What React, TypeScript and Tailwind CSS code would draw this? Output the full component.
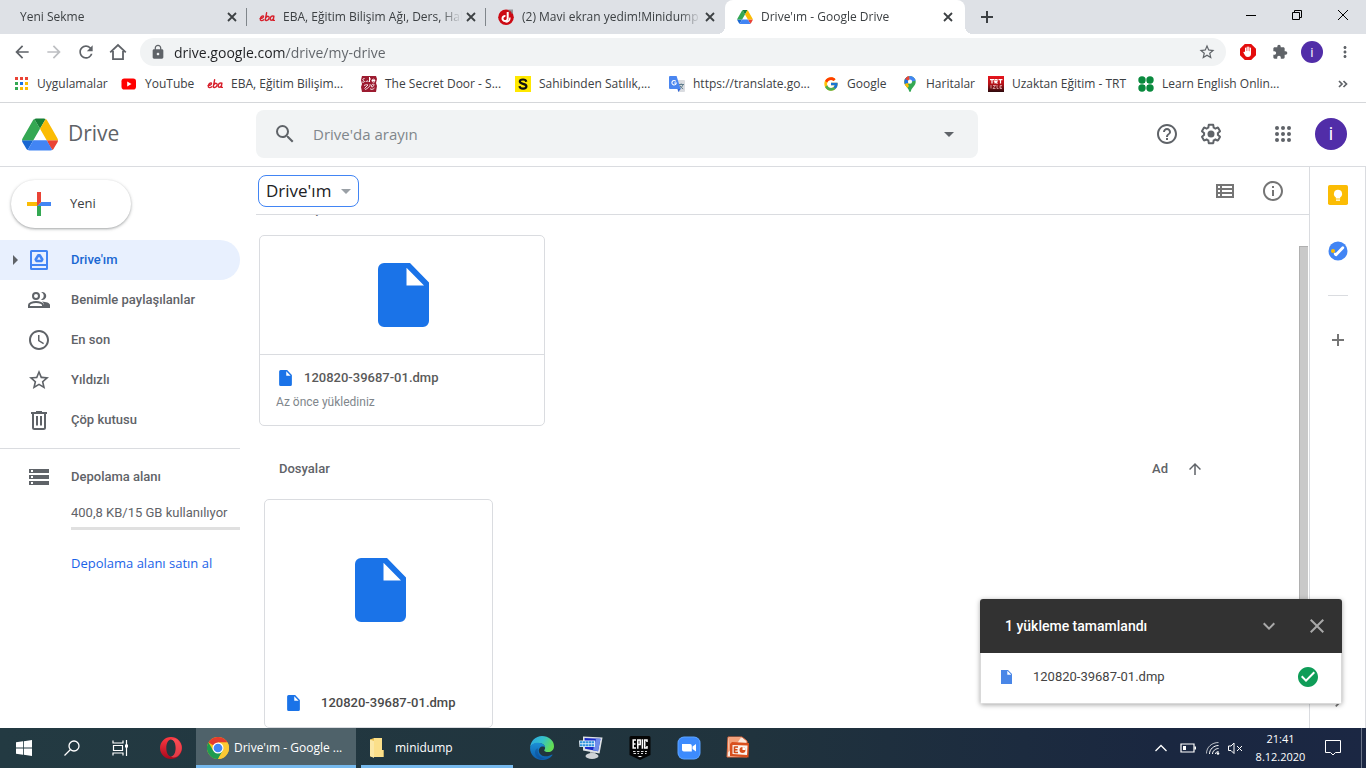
import React from "react";
import {
  MdAccessTime,
  MdAdd,
  MdArrowBack,
  MdArrowDropDown,
  MdArrowForward,
  MdArrowRight,
  MdArrowUpward,
  MdCheckCircle,
  MdChevronRight,
  MdClose,
  MdExpandMore,
  MdExtension,
  MdHelpOutline,
  MdInfoOutline,
  MdLock,
  MdMoreVert,
  MdRefresh,
  MdSearch,
  MdStarBorder,
  MdStorage,
} from "react-icons/md";
import { FcGoogle } from "react-icons/fc";

const FILE_NAME = "120820-39687-01.dmp";

/* ---------- Icons ---------- */

function DriveLogo({ className }: { className: string }) {
  return (
    <svg viewBox="0 0 87.3 78" className={className} aria-hidden="true">
      <path d="m6.6 66.85 3.85 6.65c.8 1.4 1.95 2.5 3.3 3.3l13.75-23.8h-27.5c0 1.55.4 3.1 1.2 4.5z" fill="#1967d2" />
      <path d="m43.65 25-13.75-23.8c-1.35.8-2.5 1.9-3.3 3.3l-25.4 44a9.06 9.06 0 0 0-1.2 4.5h27.5z" fill="#34a853" />
      <path d="m73.55 76.8c1.35-.8 2.5-1.9 3.3-3.3l1.6-2.75 7.65-13.25c.8-1.4 1.2-2.95 1.2-4.5h-27.502l5.852 11.5z" fill="#ea4335" />
      <path d="m43.65 25 13.75-23.8c-1.35-.8-2.9-1.2-4.5-1.2h-18.5c-1.6 0-3.15.45-4.5 1.2z" fill="#188038" />
      <path d="m59.8 53h-32.3l-13.75 23.8c1.35.8 2.9 1.2 4.5 1.2h50.8c1.6 0 3.15-.45 4.5-1.2z" fill="#4285f4" />
      <path d="m73.4 26.5-12.7-22c-.8-1.4-1.95-2.5-3.3-3.3l-13.75 23.8 16.15 28h27.45c0-1.55-.4-3.1-1.2-4.5z" fill="#fbbc04" />
    </svg>
  );
}

function EbaIcon() {
  return (
    <svg viewBox="0 0 16 16" className="size-4 shrink-0" aria-hidden="true">
      <g fill="none" stroke="#d71f2b" strokeWidth="1.4" strokeLinecap="round">
        <path d="M1 9.400c2 .2 3.600-.8 3.500-2C4.300 6.300 1.800 7 1.300 9.600c-.4 2.500 2 2.400 3.500 1.200" />
        <path d="M7.600 3.800 6.300 10.500c-.2 1.700 3.600 1.200 3.900-1.600.2-1.900-1.700-2.100-3-.6" />
        <path d="M14.900 7.200c-2-.9-3.500.6-3.700 2.500-.2 2.200 2.200 2 3.200-.2l.5-2.300-.7 4.200h1.200" />
      </g>
    </svg>
  );
}

function ForumIcon() {
  return (
    <svg viewBox="0 0 16 16" className="size-4 shrink-0" aria-hidden="true">
      <circle cx="8" cy="8.200" r="7.800" fill="#cc0a14" />
      <path d="M9.700 3v6.500a2.600 2.600 0 1 1-2.300-2.600" fill="none" stroke="#fff" strokeWidth="2" />
      <path d="M12 8.500c0 3-2 4.500-4.500 4.500" fill="none" stroke="#fff" strokeWidth="1.400" />
      <path d="M10.500.5h4.500v4h-2v-2h-2.500z" fill="#777" opacity=".7" />
    </svg>
  );
}

function AppsColorIcon() {
  const colors = ["#ea4335", "#ea4335", "#ea4335", "#34a853", "#1a73e8", "#fbbc04", "#34a853", "#fbbc04", "#fbbc04"];
  return (
    <svg viewBox="0 0 16 16" className="size-4 shrink-0" aria-hidden="true">
      {colors.map((c, i) => (
        <rect key={i} x={2 + (i % 3) * 5} y={1 + Math.floor(i / 3) * 5} width="3" height="3" fill={c} />
      ))}
    </svg>
  );
}

function YouTubeIcon() {
  return (
    <svg viewBox="0 0 16 16" className="size-4 shrink-0" aria-hidden="true">
      <rect x="0.500" y="2.500" width="14.500" height="11" rx="2.800" fill="#f00" />
      <path d="M6.200 5.400v5.200L10.500 8z" fill="#fff" />
    </svg>
  );
}

function SecretDoorIcon() {
  return (
    <svg viewBox="0 0 16 16" className="size-4 shrink-0" aria-hidden="true">
      <path d="M1 0h14l1 3-1 4 1 3-1 6H1L0 11l1-3-1-4z" fill="#9c1b30" />
      <g fill="none" stroke="#fff" strokeWidth="1">
        <path d="M3.500 2.500c-3 .3-1 2.200-.3 2.500.8 1-.7 1.500-2 1M5 6c1-2 2-1.500 2 0M8.500 1v5M8 3h2M11 4.500h3c-.5-2-3-1.500-3 .2s2 1.600 3 .8" />
        <path d="M3 9.500c2-1 3.500-1 4-.5l-3.500 3.500M9 8c1 2-3 5-5 5.500M12.500 8c-2 0-3 3-1.500 3s2-2 2-3M9 12.500c1 1.500 3 1 4.500-.5" opacity=".85" />
      </g>
    </svg>
  );
}

function SahibindenIcon() {
  return (
    <svg viewBox="0 0 16 16" className="size-4 shrink-0" aria-hidden="true">
      <rect width="16" height="16" fill="#ffe800" />
      <path
        d="M11.300 5.700C11 4 9.800 3.500 8 3.500c-2 0-3.200.7-3.200 2.100 0 3.100 6.600 1.300 6.600 4.700 0 1.500-1.400 2.300-3.300 2.300-2.100 0-3.400-.8-3.600-2.500"
        fill="none"
        stroke="#111"
        strokeWidth="2.200"
      />
    </svg>
  );
}

function TranslateIcon() {
  return (
    <svg viewBox="0 0 16 16" className="size-4 shrink-0" aria-hidden="true">
      <path d="M6 4h9a1 1 0 0 1 1 1v10a1 1 0 0 1-1 1H9.500z" fill="#dadce0" />
      <path d="M9.500 8.500h5.500M12.200 7.500v1M14 8.500c-.5 2-2 3.500-3.500 4.300M10.800 9.500c.8 1.600 2 2.700 3.400 3.400" stroke="#5f7d8c" fill="none" />
      <path d="M8.500 13h3.200l-2.400 3z" fill="#3367d6" />
      <path d="M1 0h6.600l4 13H1a1 1 0 0 1-1-1V1a1 1 0 0 1 1-1z" fill="#4a86f0" />
      <path d="M6.800 5.300a2.200 2.200 0 1 0 .5 1.700H5.200" fill="none" stroke="#fff" strokeWidth="1.100" />
    </svg>
  );
}

function MapsIcon() {
  return (
    <svg viewBox="0 0 16 16" className="size-4 shrink-0" aria-hidden="true">
      <clipPath id="pin">
        <path d="M8 0a5.700 5.700 0 0 0-5.700 5.700c0 3.800 3.300 5 4.700 9 .5 1.700 1.500 1.700 2 0 1.400-4 4.700-5.200 4.700-9A5.700 5.700 0 0 0 8 0z" />
      </clipPath>
      <g clipPath="url(#pin)">
        <path d="M0 0h16v16H0z" fill="#34a853" />
        <path d="M0 0h8L9 5 3 12H0z" fill="#fbbc04" />
        <path d="M0 0h6l2 5.500L3.500 9H0z" fill="#1a73e8" />
        <path d="M2 0h6l-1 5-4-2z" fill="#ea4335" />
        <path d="M7 0h9v4l-8 2z" fill="#4285f4" />
        <path d="M0 9.500 5 7l2 3-3 4z" fill="#fbbc04" />
      </g>
      <circle cx="8" cy="5.700" r="2.100" fill="#fff" />
    </svg>
  );
}

function TrtIcon() {
  return (
    <svg viewBox="0 0 16 16" className="size-4 shrink-0" aria-hidden="true">
      <defs>
        <linearGradient id="trt" x2="0" y2="1">
          <stop stopColor="#e8141c" />
          <stop offset=".5" stopColor="#b51218" />
          <stop offset="1" stopColor="#2b0a0c" />
        </linearGradient>
      </defs>
      <rect width="16" height="16" fill="url(#trt)" />
      <path d="M2 3.600h4M4 3v4.500M7 7.500v-4h2v2H7l2.500 2M10.500 3.600h4M12.500 3v4.500" stroke="#fff" strokeWidth="1.200" fill="none" />
      <path d="M3 9v3.500M5 9.500h2.500L5 12.500h2.500M9 9v3.500h1.500M14 9.500h-2v3h2M12 11h1.500" stroke="#e9b3b5" strokeWidth=".8" fill="none" />
    </svg>
  );
}

function CloverIcon() {
  return (
    <svg viewBox="0 0 16 16" className="size-4 shrink-0" fill="#0a8a3e" aria-hidden="true">
      <circle cx="4" cy="4" r="3.700" />
      <circle cx="12" cy="4" r="3.700" />
      <circle cx="4" cy="12" r="3.700" />
      <circle cx="12" cy="12" r="3.700" />
      <path d="M5 5h2v2H5zM9 5h2v2H9zM5 9h2v2H5zM9 9h2v2H9z" />
    </svg>
  );
}

function AdblockIcon() {
  return (
    <svg viewBox="0 0 16 16" className="size-4" aria-hidden="true">
      <path d="M4.800 0h6.400L16 4.800v6.400L11.200 16H4.800L0 11.200V4.800z" fill="#e40d0d" />
      <path
        d="M5 8V4.200a.6.6 0 0 1 1.200 0V7h.4V3.200a.6.600 0 0 1 1.200 0V7h.4V3a.6.6 0 0 1 1.200 0v4.200h.4V4a.6.6 0 0 1 1.200 0v6c0 2-1.300 3-3.200 3-1.600 0-2.300-.7-3-2L3.400 8.500c-.2-.7.800-1 1.600-.5z"
        fill="#fff"
      />
    </svg>
  );
}

function HomeIcon() {
  return (
    <svg viewBox="0 0 20 20" className="size-5" fill="none" stroke="currentColor" strokeWidth="1.800" aria-hidden="true">
      <path d="M2.200 10.400 10 3l7.800 7.400M5 9v8.100h10V9" />
    </svg>
  );
}

function TabCloseIcon() {
  return (
    <svg viewBox="0 0 14 14" className="size-[14px]" fill="none" stroke="currentColor" strokeWidth="1.800" aria-hidden="true">
      <path d="m3 3 8 8M11 3l-8 8" />
    </svg>
  );
}

function FileIcon({ className }: { className: string }) {
  return (
    <svg viewBox="0 0 51 64" className={className} aria-hidden="true">
      <path fillRule="evenodd" d="M6 0h26l19 19.500V58a6 6 0 0 1-6 6H6a6 6 0 0 1-6-6V6a6 6 0 0 1 6-6zm22.500 4.800V22.500H46z" />
    </svg>
  );
}

function GearIcon() {
  return (
    <svg viewBox="0 0 24 24" className="size-6" fill="currentColor" aria-hidden="true">
      <path d="M13.850 22.250h-3.700c-.74 0-1.360-.54-1.450-1.270l-.27-1.890c-.27-.14-.53-.29-.79-.46l-1.800.72c-.7.260-1.470-.03-1.810-.65L2.200 15.530c-.35-.66-.2-1.440.360-1.880l1.530-1.190c-.01-.15-.02-.3-.02-.46 0-.15.010-.31.020-.46l-1.520-1.190c-.59-.45-.74-1.260-.37-1.880l1.850-3.190c.34-.62 1.110-.9 1.790-.63l1.810.73c.26-.17.52-.32.78-.46l.27-1.910c.09-.7.710-1.250 1.440-1.250h3.700c.74 0 1.360.54 1.450 1.270l.27 1.890c.27.140.53.290.79.460l1.800-.72c.71-.26 1.480.03 1.820.65l1.840 3.180c.36.660.2 1.440-.36 1.880l-1.520 1.190c.010.15.020.3.020.46s-.01.31-.02.46l1.520 1.190c.56.450.720 1.230.370 1.860l-1.860 3.220c-.34.620-1.110.9-1.800.63l-1.800-.72c-.26.170-.52.320-.78.460l-.27 1.910c-.1.680-.72 1.220-1.460 1.220zm-3.230-2h2.760l.37-2.550.53-.22c.44-.18.880-.44 1.340-.78l.45-.34 2.380.96 1.380-2.400-2.030-1.580.07-.56c.030-.26.060-.51.060-.78s-.03-.53-.06-.78l-.07-.56 2.030-1.580-1.390-2.400-2.390.96-.45-.35c-.42-.32-.87-.58-1.330-.77l-.52-.22-.37-2.550h-2.760l-.37 2.550-.53.210c-.44.190-.88.440-1.340.79l-.45.330-2.380-.95-1.390 2.390 2.030 1.580-.07.560a7 7 0 0 0-.06.790c0 .26.020.53.060.78l.07.560-2.030 1.580 1.380 2.400 2.390-.96.450.350c.43.330.86.580 1.330.77l.53.220z" />
      <circle cx="12" cy="12" r="3.500" />
    </svg>
  );
}

function DotsGridIcon() {
  return (
    <svg viewBox="0 0 24 24" className="size-6" fill="currentColor" aria-hidden="true">
      {[6, 12, 18].map((y) => [6, 12, 18].map((x) => <circle key={`${x}-${y}`} cx={x} cy={y} r="2" />))}
    </svg>
  );
}

function ListViewIcon() {
  return (
    <svg viewBox="0 0 24 24" className="size-6" aria-hidden="true">
      <path fill="currentColor" fillRule="evenodd" d="M3 5h18v14H3zm2 2v2h2V7zm4 0v2h10V7zM5 11v2h2v-2zm4 0v2h10v-2zM5 15v2h2v-2zm4 0v2h10v-2z" />
    </svg>
  );
}

function MyDriveIcon() {
  return (
    <svg viewBox="0 0 24 24" className="size-6" aria-hidden="true">
      <path fill="#4285f4" fillRule="evenodd" d="M4.500 2h15A1.500 1.500 0 0 1 21 3.500v17a1.500 1.500 0 0 1-1.500 1.500h-15A1.500 1.500 0 0 1 3 20.500v-17A1.500 1.500 0 0 1 4.500 2zM5 4v12h14V4zm0 14v2h14v-2z" />
      <path fill="none" stroke="#4285f4" strokeWidth="2.600" strokeLinejoin="round" d="M11.200 7.300h1.600l2.500 4.200-.8 1.500h-5l-.8-1.500z" />
    </svg>
  );
}

function PeopleIcon() {
  return (
    <svg viewBox="0 0 24 24" className="size-6" aria-hidden="true">
      <circle cx="9" cy="8" r="3" fill="none" stroke="currentColor" strokeWidth="2" />
      <path d="M2 19v-2c0-1.800 3.500-3 7-3s7 1.200 7 3v2z" fill="none" stroke="currentColor" strokeWidth="2" />
      <path d="M14 11.800a4 4 0 0 0 0-7.600 4 4 0 1 1 0 7.600zM17 20v-3c0-1.500-.8-2.700-2-3.500 4 .3 8 1.500 8 3.500v3z" fill="currentColor" />
    </svg>
  );
}

function TrashIcon() {
  return (
    <svg viewBox="0 0 24 24" className="size-6" aria-hidden="true">
      <path fill="none" stroke="currentColor" strokeWidth="2" d="M4 5h16M9 4h6M6 5v14.500A1.500 1.500 0 0 0 7.500 21h9a1.500 1.500 0 0 0 1.500-1.500V5M10 8v9.500M14 8v9.500" />
    </svg>
  );
}

function PlusColorIcon() {
  return (
    <svg viewBox="0 0 36 36" className="size-9" aria-hidden="true">
      <path d="M16 16v14h4V20z" fill="#34a853" />
      <path d="M30 16H20l-4 4h14z" fill="#4285f4" />
      <path d="M6 16v4h10l4-4z" fill="#fbbc05" />
      <path d="M20 16V6h-4v14z" fill="#ea4335" />
    </svg>
  );
}

function KeepIcon() {
  return (
    <svg viewBox="0 0 20 20" className="size-5" aria-hidden="true">
      <rect width="20" height="20" rx="1.800" fill="#fbbc04" />
      <path d="M10 4.800a4 4 0 0 0-2.200 7.400V13.500h4.400v-1.300A4 4 0 0 0 10 4.800zM8 14.600h4v1.200H8z" fill="#fff" />
    </svg>
  );
}

function TasksIcon() {
  return (
    <svg viewBox="0 0 20 20" className="size-5" aria-hidden="true">
      <circle cx="10" cy="10" r="9.500" fill="#4285f4" />
      <path d="m8 13.800 6.800-7" stroke="#fff" strokeWidth="2.800" strokeLinecap="round" />
      <path d="m7 12.800 1 1" stroke="#fff" strokeWidth="2.400" strokeLinecap="round" />
      <circle cx="5" cy="10" r="2.100" fill="#fbbc04" />
    </svg>
  );
}

/* ---------- Browser frame ---------- */

function Tab({ title, icon, active }: { title: string; icon?: React.ReactNode; active?: boolean }) {
  return (
    <div
      className={
        active
          ? "relative flex w-60 min-w-0 items-center rounded-t-lg bg-white pr-[10px] pl-3 text-[#3c4043]"
          : "relative flex w-[239px] min-w-0 items-center pr-2 pl-3 text-[#3c4043]"
      }
    >
      {active && (
        <>
          <span className="absolute bottom-0 -left-2 size-2 bg-[radial-gradient(circle_at_0_0,#dee1e6_8px,#fff_8px)]" />
          <span className="absolute -right-2 bottom-0 size-2 bg-[radial-gradient(circle_at_100%_0,#dee1e6_8px,#fff_8px)]" />
        </>
      )}
      <button type="button" role="tab" aria-selected={!!active} className="flex min-w-0 flex-1 items-center gap-2 overflow-hidden text-left">
        {icon}
        <span className="flex-1 overflow-hidden whitespace-nowrap [mask-image:linear-gradient(to_right,#000_88%,transparent)]">
          {title}
        </span>
      </button>
      <button type="button" aria-label={`Kapat: ${title}`} className="ml-[2px] shrink-0">
        <TabCloseIcon />
      </button>
    </div>
  );
}

function TabStrip() {
  return (
    <div className="flex h-[34px] shrink-0 bg-[#dee1e6] pl-2 text-[12px]">
      <div role="tablist" className="flex min-w-0">
        <Tab title="Yeni Sekme" />
        <span className="my-2 -ml-px w-px shrink-0 bg-[#80868b]" />
        <Tab title="EBA, Eğitim Bilişim Ağı, Ders, Hab" icon={<EbaIcon />} />
        <span className="my-2 -ml-px w-px shrink-0 bg-[#80868b]" />
        <Tab title="(2) Mavi ekran yedim!Minidump p" icon={<ForumIcon />} />
        <Tab title="Drive'ım - Google Drive" icon={<DriveLogo className="h-[14px] w-4 shrink-0" />} active />
      </div>
      <button type="button" aria-label="Yeni sekme" className="ml-3 text-[#3c4043]">
        <svg viewBox="0 0 20 20" className="size-5" fill="none" stroke="currentColor" strokeWidth="2"><path d="M10 4v12M4 10h12" /></svg>
      </button>
      <div className="ml-auto flex h-[29px] text-black">
        <button type="button" aria-label="Simge durumuna küçült" className="grid w-[46px] place-items-center">
          <svg viewBox="0 0 12 12" className="size-3" stroke="currentColor" fill="none"><path d="M1 6.500h10" /></svg>
        </button>
        <button type="button" aria-label="Önceki boyut" className="grid w-[46px] place-items-center">
          <svg viewBox="0 0 12 12" className="size-3" stroke="currentColor" fill="none"><path d="M1.500 3.500h7v7h-7zM3.500 3.500v-2h7v7h-2" /></svg>
        </button>
        <button type="button" aria-label="Pencereyi kapat" className="grid w-[46px] place-items-center">
          <svg viewBox="0 0 12 12" className="size-3" stroke="currentColor" fill="none"><path d="m1 1 10 10M11 1 1 11" /></svg>
        </button>
      </div>
    </div>
  );
}

function AddressBar() {
  return (
    <div className="flex h-9 shrink-0 items-center bg-white pl-3 text-[#5f6368]">
      <button type="button" aria-label="Geri" className="mr-3"><MdArrowBack className="size-5" /></button>
      <button type="button" aria-label="İleri" className="mr-3 text-[#bdbfc2]"><MdArrowForward className="size-5" /></button>
      <button type="button" aria-label="Yenile" className="mr-3"><MdRefresh className="size-5" /></button>
      <button type="button" aria-label="Ana sayfa" className="mr-3"><HomeIcon /></button>
      <div className="flex h-7 min-w-0 flex-1 items-center rounded-full bg-[#f1f3f4] px-[10px]">
        <MdLock className="mr-2 size-4 shrink-0" />
        <input
          aria-label="Adres çubuğu"
          defaultValue="drive.google.com/drive/my-drive"
          className="min-w-0 flex-1 bg-[linear-gradient(to_right,#202124_111px,#5f6368_111px)] bg-clip-text text-[14px] text-transparent outline-none"
        />
        <button type="button" aria-label="Yer işareti ekle"><MdStarBorder className="size-[18px]" /></button>
      </div>
      <button type="button" aria-label="AdBlock" className="ml-[14px]"><AdblockIcon /></button>
      <button type="button" aria-label="Uzantılar" className="ml-4"><MdExtension className="size-4" /></button>
      <button type="button" aria-label="Profil" className="ml-[13px] grid size-[22px] place-items-center rounded-full bg-[#512da8] text-[13px] leading-none text-white">i</button>
      <button type="button" aria-label="Menü" className="mr-3 ml-[13px]"><MdMoreVert className="size-[18px]" /></button>
    </div>
  );
}

function Bookmarks() {
  const items = [
    { label: "Uygulamalar", icon: <AppsColorIcon />, width: "w-[108px]" },
    { label: "YouTube", icon: <YouTubeIcon />, width: "w-[86px]" },
    { label: "EBA, Eğitim Bilişim...", icon: <EbaIcon />, width: "w-[154px]" },
    { label: "The Secret Door - S...", icon: <SecretDoorIcon />, width: "w-[154px]" },
    { label: "Sahibinden Satılık,...", icon: <SahibindenIcon />, width: "w-[154px]" },
    { label: "https://translate.go...", icon: <TranslateIcon />, width: "w-[154px]" },
    { label: "Google", icon: <FcGoogle className="size-4 shrink-0" />, width: "w-[79px]" },
    { label: "Haritalar", icon: <MapsIcon />, width: "w-[86px]" },
    { label: "Uzaktan Eğitim - TRT", icon: <TrtIcon />, width: "w-[150px]" },
    { label: "Learn English Onlin...", icon: <CloverIcon />, width: "w-[154px]" },
  ];
  return (
    <nav aria-label="Yer işaretleri" className="flex h-[33px] shrink-0 items-center border-b border-[#d5d7da] bg-white pb-[5px] pl-[13px] text-[12px] text-[#3c4043]">
      {items.map((b) => (
        <a key={b.label} href="#" className={`flex shrink-0 items-center gap-2 whitespace-nowrap ${b.width}`}>
          {b.icon}
          {b.label}
        </a>
      ))}
      <button type="button" aria-label="Diğer yer işaretleri" className="mr-[18px] ml-auto">
        <svg viewBox="0 0 10 8" className="h-2 w-[10px]" fill="none" stroke="#5f6368" strokeWidth="1.700"><path d="m1 1 3 3-3 3M5.500 1l3 3-3 3" /></svg>
      </button>
    </nav>
  );
}

/* ---------- Drive ---------- */

function DriveHeader() {
  return (
    <header className="flex h-16 shrink-0 items-center border-b border-[#dadce0] pr-[19px] pb-px text-[#5f6368]">
      <a href="#" className="flex w-64 shrink-0 items-center gap-[10px] pl-[22px] font-['Open_Sans',sans-serif] text-[21px]">
        <DriveLogo className="h-[33px] w-9" />
        Drive
      </a>
      <div role="search" className="flex h-12 w-[722px] min-w-0 items-center rounded-lg bg-[#f1f3f4] px-[17px]">
        <MdSearch className="size-6 shrink-0" />
        <input
          aria-label="Drive'da arayın"
          placeholder="Drive'da arayın"
          className="ml-4 min-w-0 flex-1 bg-transparent font-['Open_Sans',sans-serif] text-[15px] outline-none placeholder:text-[#80868b]"
        />
        <button type="button" aria-label="Arama seçenekleri"><MdArrowDropDown className="size-6" /></button>
      </div>
      <div className="ml-auto flex items-center">
        <button type="button" aria-label="Destek" className="mr-5"><MdHelpOutline className="size-6" /></button>
        <button type="button" aria-label="Ayarlar" className="mr-12"><GearIcon /></button>
        <button type="button" aria-label="Google uygulamaları" className="mr-5"><DotsGridIcon /></button>
        <button type="button" aria-label="Google Hesabı" className="grid size-8 place-items-center rounded-full bg-[#512da8] text-[18px] leading-none text-white">i</button>
      </div>
    </header>
  );
}

function Sidebar() {
  const items = [
    { label: "Benimle paylaşılanlar", icon: <PeopleIcon /> },
    { label: "En son", icon: <MdAccessTime className="size-6" /> },
    { label: "Yıldızlı", icon: <MdStarBorder className="size-6" /> },
    { label: "Çöp kutusu", icon: <TrashIcon /> },
  ];
  return (
    <aside className="w-60 shrink-0 pt-[13px] text-[13px] text-[#5f6368]">
      <button type="button" className="ml-[11px] flex h-12 w-[120px] items-center gap-[13px] rounded-full bg-white pl-[10px] font-['Open_Sans',sans-serif] font-medium text-[#3c4043] shadow-[0_1px_2px_0_rgba(60,64,67,0.302),0_1px_3px_1px_rgba(60,64,67,0.149)]">
        <PlusColorIcon />
        Yeni
      </button>
      <nav aria-label="Drive" className="mt-3 font-medium">
        <a href="#" aria-current="page" className="flex h-10 items-center rounded-r-full bg-[#e8f0fe] pl-[3px] text-[#1967d2]">
          <MdArrowRight className="size-6 text-[#5f6368]" />
          <MyDriveIcon />
          <span className="ml-5">Drive'ım</span>
        </a>
        {items.map((it) => (
          <a key={it.label} href="#" className="flex h-10 items-center gap-5 pl-[27px]">
            {it.icon}
            {it.label}
          </a>
        ))}
      </nav>
      <div className="mt-2 border-t border-[#dadce0] pt-4">
        <a href="#" className="flex items-center gap-5 pl-[27px] font-medium"><MdStorage className="size-6" />Depolama alanı</a>
        <div className="pl-[71px]">
          <p className="mt-[14px] leading-5">400,8 KB/15 GB kullanılıyor</p>
          <div className="mt-1 h-[3px] bg-[#e0e0e0]" />
          <a href="#" className="mt-[23px] block font-['Open_Sans',sans-serif] leading-5 whitespace-nowrap text-[#1a63e8]">Depolama alanı satın al</a>
        </div>
      </div>
    </aside>
  );
}

function QuickCard() {
  return (
    <article className="flex h-[191px] w-[286px] flex-col rounded-[5px] border border-[#dadce0]">
      <div className="grid h-[119px] place-items-center border-b border-[#dadce0] pl-[3px]">
        <FileIcon className="h-16 w-[51px] fill-[#1a73e8]" />
      </div>
      <div className="px-4 pt-[13px]">
        <h3 className="flex items-center font-medium text-[#5a5a5a]">
          <FileIcon className="mr-3 ml-[3px] h-4 w-[13px] fill-[#1a73e8]" />
          {FILE_NAME}
        </h3>
        <p className="mt-[5px] text-[12px] text-[#80868b]">Az önce yüklediniz</p>
      </div>
    </article>
  );
}

function FileCard() {
  return (
    <article className="flex h-[229px] w-[229px] flex-col rounded-[5px] border border-[#dadce0]">
      <div className="grid h-[179px] place-items-center pl-[3px]">
        <FileIcon className="h-16 w-[51px] fill-[#1a73e8]" />
      </div>
      <h3 className="flex flex-1 items-center pl-[22px] font-medium text-[#4a4a4a]">
        <FileIcon className="mr-[21px] h-4 w-[13px] fill-[#1a73e8]" />
        {FILE_NAME}
      </h3>
    </article>
  );
}

function MainPane() {
  return (
    <main className="ml-4 flex min-w-0 flex-1 flex-col">
      <div className="flex h-12 shrink-0 items-center border-b border-[#dadce0] pr-6 pl-[2px] text-[#757575]">
        <button type="button" className="flex h-8 items-center rounded-lg border border-[#4285f4] pl-[7px] font-['Open_Sans',sans-serif] text-[17px] text-[#202124]">
          Drive'ım
          <MdArrowDropDown className="ml-[3px] size-6 text-[#9aa0a6]" />
        </button>
        <button type="button" aria-label="Liste düzeni" className="ml-auto"><ListViewIcon /></button>
        <button type="button" aria-label="Ayrıntıları görüntüle" className="ml-6"><MdInfoOutline className="size-6" /></button>
      </div>
      <div className="flex min-h-0 flex-1 overflow-hidden">
        <div className="-mt-4 min-w-0 flex-1 text-[13px] text-[#5f6368]">
          <h2 className="pl-[13px] leading-5 font-medium">Hızlı Erişim</h2>
          <div className="mt-4 pl-[3px]"><QuickCard /></div>
          <div className="mt-[33px] flex h-5 items-center pr-[95px] pl-[23px] font-medium">
            <h2>Dosyalar</h2>
            <button type="button" className="ml-auto flex items-center gap-[18px]">Ad <MdArrowUpward className="size-[18px]" /></button>
          </div>
          <div className="mt-5 pl-2"><FileCard /></div>
        </div>
        <div className="mt-[31px] mr-px h-[400px] w-[9px] shrink-0 border-t border-l border-[#b0b0b0] bg-[#c9c9c9]" />
      </div>
    </main>
  );
}

function SidePanel() {
  return (
    <aside aria-label="Yan panel" className="flex w-[57px] shrink-0 flex-col items-center border-x border-[#dadce0] pt-[18px] pb-[16px] text-[#757575]">
      <button type="button" aria-label="Keep"><KeepIcon /></button>
      <button type="button" aria-label="Görevler" className="mt-9"><TasksIcon /></button>
      <span className="mt-[34px] h-px w-5 bg-[#dadce0]" />
      <button type="button" aria-label="Eklentileri edinin" className="mt-8">
        <svg viewBox="0 0 24 24" className="size-6" fill="none" stroke="currentColor" strokeWidth="2"><path d="M12 6v12M6 12h12" /></svg>
      </button>
      <button type="button" aria-label="Yan paneli gizle" className="mt-auto"><MdChevronRight className="size-5" /></button>
    </aside>
  );
}

function UploadToast() {
  return (
    <section aria-label="Yüklemeler" className="absolute right-6 bottom-6 w-[362px] overflow-hidden rounded-[3px] bg-white shadow-[0_1px_5px_rgba(0,0,0,0.35)]">
      <div className="flex h-[54px] items-center bg-[#323232] pr-[13px] pl-[25px] text-[14px] font-medium text-white">
        1 yükleme tamamlandı
        <button type="button" aria-label="Küçült" className="ml-auto text-[#a8a8a8]"><MdExpandMore className="size-6" /></button>
        <button type="button" aria-label="Kapat" className="ml-6 text-[#a8a8a8]"><MdClose className="size-6" /></button>
      </div>
      <div className="flex h-[51px] items-center border-x border-b border-[#d9d9d9] pr-[21px] pb-[2px] pl-5 text-[13px] text-[#444]">
        <svg viewBox="0 0 11 14" className="mr-[21px] h-[14px] w-[11px]" aria-hidden="true">
          <path fillRule="evenodd" fill="#4986e7" d="M0 0h7l4 4v10H0zm6.300.8v4h4z" />
        </svg>
        {FILE_NAME}
        <MdCheckCircle className="ml-auto size-6 text-[#0f9d58]" />
      </div>
    </section>
  );
}

/* ---------- Windows taskbar ---------- */

function OperaIcon() {
  return (
    <svg viewBox="0 0 24 24" className="size-6" aria-hidden="true">
      <defs>
        <linearGradient id="op" x2="0" y2="1"><stop stopColor="#ff3a42" /><stop offset="1" stopColor="#a8081c" /></linearGradient>
      </defs>
      <path fillRule="evenodd" fill="url(#op)" d="M12 1a11 11 0 1 0 0 22 11 11 0 0 0 0-22zm0 2.500c2.800 0 4.700 3.800 4.700 8.500s-1.900 8.500-4.700 8.500-4.700-3.800-4.700-8.500S9.200 3.500 12 3.500z" />
      <path fill="#ff5a60" opacity=".6" d="M12 3.500c2-1.500 5-1 7 .5 5 5 5 11 0 16-2 1.500-5 2-7 .5 2.800 0 4.700-3.800 4.700-8.500S14.800 3.500 12 3.500z" />
    </svg>
  );
}

function ChromeIcon() {
  return (
    <svg viewBox="0 0 48 48" className="size-[22px] shrink-0" aria-hidden="true">
      <circle cx="24" cy="24" r="24" fill="#fbc116" />
      <path d="M24 24 3.200 12A24 24 0 0 1 44.800 12H24z" fill="#e33b2e" />
      <path d="M3.200 12 13.600 30 24 36 24 48A24 24 0 0 1 3.200 12z" fill="#1e9b50" />
      <path d="M24 48 34.400 30 24 24 13.600 30 24 34z" fill="#1e9b50" />
      <path d="M24 48a24 24 0 0 0 20.800-36H24l10.400 18z" fill="#fcc934" />
      <circle cx="24" cy="24" r="12" fill="#fff" />
      <circle cx="24" cy="24" r="9.500" fill="#4285f4" />
    </svg>
  );
}

function EdgeIcon() {
  return (
    <svg viewBox="0 0 24 24" className="size-6" aria-hidden="true">
      <defs>
        <linearGradient id="e1" x2="1" y2=".4"><stop stopColor="#2aa5e8" /><stop offset=".55" stopColor="#35c1c9" /><stop offset="1" stopColor="#62dd55" /></linearGradient>
        <linearGradient id="e2" x2="0" y2="1"><stop stopColor="#1b8fd6" /><stop offset="1" stopColor="#0c5cab" /></linearGradient>
      </defs>
      <path d="M.1 11.500C.6 5 5.600 0 12 0c6.500 0 12 4.300 12 10.200 0 3.600-2.700 5.900-5.800 5.900-2.500 0-4-.9-4-1.800 0-.6.900-1 .9-2.600 0-2.200-2.400-4.600-6-4.600C4.600 7.100 1 9.200.1 11.500z" fill="url(#e1)" />
      <path d="M.1 11.500C.8 8.500 4.500 6.500 8.500 6.800c4 .2 6.600 2.500 6.600 4.900-.8-1.400-3.800-1.600-5.400.2-2.500 3 .3 8 5 8.400 3 .3 5.500-.7 7-1.600.600-.3.900.1.600.6A12 12 0 0 1 12 24C5 24-.4 18.200.1 11.500z" fill="url(#e2)" />
      <path d="M8 12.500c-1.200 4.200 1.700 9.600 6.700 9.800-3.500 2.400-9.700-.9-9.700-6 0-2 1.200-3.800 3-3.800z" fill="#0f4f98" opacity=".55" />
    </svg>
  );
}

function MonitorIcon() {
  return (
    <svg viewBox="0 0 24 24" className="size-6" aria-hidden="true">
      <path d="M11 15h5l1 5h-6z" fill="#9aa0a6" />
      <ellipse cx="13" cy="20" rx="6.500" ry="3" fill="#cfd3d6" />
      <path d="m4 .5 19.500 1-3 16L4 14.500z" fill="#dfe3e6" />
      <path d="m5.500 2 16 .8-2.500 12.500L6 12.700z" fill="#1a2bc9" />
      <path d="m17 2.600 4.500.2-2.500 12.500-5-1z" fill="#6f8cea" />
      <path d="M0 4.500h16v6.500H.5z" fill="#dfeefa" />
      <path d="M1 6.300h14M1 9.300h14" stroke="#2f93dd" strokeWidth="2" strokeDasharray="2.400 .5" />
    </svg>
  );
}

function EpicIcon() {
  return (
    <svg viewBox="0 0 22 24" className="h-6 w-[22px]" aria-hidden="true">
      <path d="M2 0h18a1.500 1.500 0 0 1 1.500 1.500V19L11 24 .5 19V1.500A1.500 1.500 0 0 1 2 0z" fill="#050505" />
      <g fill="none" stroke="#fff" strokeWidth="1.500">
        <path d="M7 4H4.200v8H7M4.200 8h2.300M8.800 12.700V4h2.400v4.500H8.800M13.400 3.300v9.400M18 6V4h-2.300v8H18v-2" />
      </g>
      <path d="M4 15.500h2.500M8 15.500h2.500M12 15.500h2.500M16 15.500h2M4.500 17.500H7M8.500 17.500H10M12 17.500h2M16 17.500h1.500" stroke="#ddd" strokeWidth="1.100" />
      <path d="M8.500 20h5L11 21.200z" fill="#fff" />
    </svg>
  );
}

function ZoomIcon() {
  return (
    <svg viewBox="0 0 24 24" className="size-6" aria-hidden="true">
      <rect x=".5" y=".5" width="23" height="23" rx="6.500" fill="#5aa2ff" />
      <rect x="1.500" y="1.500" width="21" height="21" rx="5.500" fill="#3d8bfd" />
      <path d="M5 8h8a1.800 1.800 0 0 1 1.800 1.800V15.500H6.800A1.800 1.800 0 0 1 5 13.700zM15.500 10.500 19 8v7.500l-3.500-2.500z" fill="#fff" />
    </svg>
  );
}

function PowerPointIcon() {
  return (
    <svg viewBox="0 0 24 24" className="size-6" aria-hidden="true">
      <path d="M2 1h14l5 4v16L1 21z" fill="#fbe9de" stroke="#e2683a" />
      <path d="M3 1.500h12l-4 6-9 9z" fill="#f4a078" />
      <path d="m4 8 2-2 17 1-.5 14.500L4 20z" fill="#d9501e" />
      <path d="M6.500 9 21.500 9.500 21 19 6.500 18z" fill="#fbf3ee" />
      <path d="M8.500 10.500v6.500M8.500 11h3.500M8.500 13.800h3M8.500 16.500h3.500" stroke="#d04a16" strokeWidth="1.600" />
      <circle cx="16.500" cy="14" r="3" fill="#d9501e" />
      <path d="M16.500 14v-3a3 3 0 0 1 3 3z" fill="#fff" />
    </svg>
  );
}

function Taskbar() {
  const apps = [
    { label: "Microsoft Edge", icon: <EdgeIcon /> },
    { label: "Uzak masaüstü", icon: <MonitorIcon /> },
    { label: "Epic Games", icon: <EpicIcon /> },
    { label: "Zoom", icon: <ZoomIcon /> },
    { label: "PowerPoint", icon: <PowerPointIcon /> },
  ];
  return (
    <footer className="flex h-10 shrink-0 bg-[linear-gradient(to_right,#233a42,#20333d_55%,#1a2740_85%,#1b2743)] text-[12px] text-white">
      <button type="button" aria-label="Başlat" className="grid w-12 place-items-center">
        <svg viewBox="0 0 16 16" className="size-4" fill="#fff"><path d="M0 2.300 7 1.300V7.600H0zM7.800 1.200 16 0v7.600H7.800zM0 8.400h7v6.300L0 13.700zM7.800 8.400H16V16l-8.200-1.200z" /></svg>
      </button>
      <button type="button" aria-label="Ara" className="grid w-12 place-items-center">
        <svg viewBox="0 0 16 16" className="size-4" fill="none" stroke="#fff" strokeWidth="1.300"><circle cx="10" cy="6" r="5" /><path d="M6.500 9.500.5 15.500" /></svg>
      </button>
      <button type="button" aria-label="Görev görünümü" className="grid w-12 place-items-center">
        <svg viewBox="0 0 17 16" className="h-4 w-[17px]" fill="none" stroke="#fff" strokeWidth="1.200"><path d="M1 .5v2.500h10V.5M1.500 5.500h9v5h-9zM1 15.500V13h10v2.500M14.500 0v16" /><path d="M13 4.500h3v3h-3z" fill="#fff" stroke="none" /></svg>
      </button>
      <button type="button" aria-label="Opera" className="grid w-[52px] place-items-center pl-[2px]"><OperaIcon /></button>
      <button type="button" className="flex w-40 min-w-0 items-center gap-[5px] border-b-[3px] border-[#76b9ed] bg-[#4f626a] pt-[3px] pl-[11px]">
        <ChromeIcon />
        <span className="whitespace-nowrap">Drive'ım - Google ...</span>
      </button>
      <button type="button" className="ml-[5px] flex w-[152px] items-center gap-[11px] border-b-[3px] border-[#76b9ed] pt-[3px] pl-[9px]">
        <svg viewBox="0 0 14 20" className="h-5 w-[14px]" aria-hidden="true">
          <path d="M0 1.500 4 0h8v12h1.500v7H1L0 18z" fill="#e9bd4b" />
          <path d="M4 0h8v12h1.500v7H4z" fill="#fbdf8a" />
          <path d="M0 1.500 4 3v17L0 18z" fill="#fbe7a5" />
        </svg>
        minidump
      </button>
      <div className="ml-1 flex">
        {apps.map((a) => (
          <button key={a.label} type="button" aria-label={a.label} className="grid w-[49px] place-items-center">{a.icon}</button>
        ))}
      </div>
      <div className="ml-auto flex items-center">
        <button type="button" aria-label="Gizli simgeleri göster" className="mr-3">
          <svg viewBox="0 0 14 8" className="h-2 w-[14px]" fill="none" stroke="#fff" strokeWidth="1.300"><path d="m1.500 7 5.500-5.500L12.500 7" /></svg>
        </button>
        <svg viewBox="0 0 16 10" className="mr-[10px] h-[10px] w-4" fill="none" stroke="#fff" strokeWidth="1.200" aria-hidden="true">
          <path d="M1 1h13v8H1z" /><path d="M3 3h3v4H3zM14.500 3.500H16v3h-1.500z" fill="#fff" stroke="none" />
        </svg>
        <svg viewBox="0 0 14 14" className="mr-2 size-[14px]" fill="none" stroke="#fff" aria-hidden="true">
          <path d="M.5 12.500C.5 6 6 1.500 12.500 1.500" opacity=".7" /><path d="M3.500 13C3.500 8 8 4.500 12.500 4.500M6.500 13c0-3 3-5.500 6-5.500M9.500 13c0-1.500 1.500-2.500 3-2.500" /><circle cx="12" cy="12.500" r="1.300" fill="#fff" stroke="none" />
        </svg>
        <svg viewBox="0 0 15 12" className="h-3 w-[15px]" fill="none" stroke="#fff" aria-hidden="true">
          <path d="M.5 4H3l3-3v10.500L3 8.500H.5zM9 4l5 5M14 4 9 9" />
        </svg>
        <time className="w-[75px] text-center text-[11px] leading-[18px]">21:41<br />8.12.2020</time>
        <button type="button" aria-label="Bildirimler" className="mr-5 ml-[7px]">
          <svg viewBox="0 0 16 16" className="size-4" fill="none" stroke="#fff"><path d="M.5.5h15v12h-5L8 15l-2.500-2.500h-5z" /></svg>
        </button>
        <span className="mr-1 h-10 w-px bg-[#6a7488]" />
      </div>
    </footer>
  );
}

export default function App() {
  return (
    <div className="flex h-screen flex-col overflow-hidden bg-white font-['Open_Sans',sans-serif]">
      <TabStrip />
      <AddressBar />
      <Bookmarks />
      <div className="relative flex min-h-0 flex-1 flex-col font-[Roboto,sans-serif]">
        <DriveHeader />
        <div className="flex min-h-0 flex-1">
          <Sidebar />
          <MainPane />
          <SidePanel />
        </div>
        <UploadToast />
      </div>
      <Taskbar />
    </div>
  );
}
